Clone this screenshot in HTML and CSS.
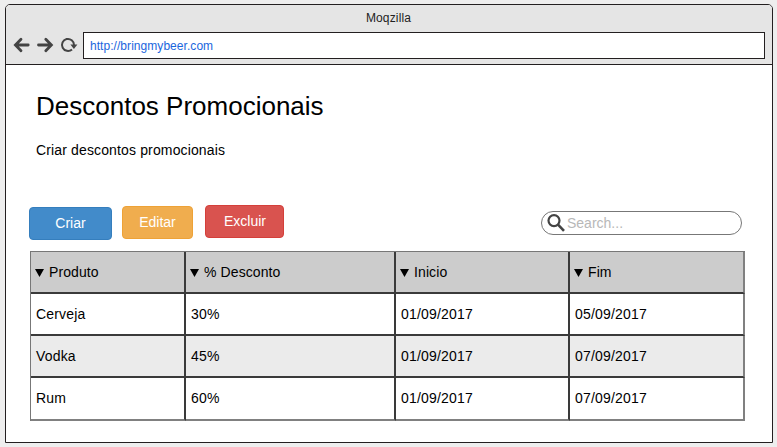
FILE: index.html
```html
<!DOCTYPE html>
<html lang="pt-BR">
<head>
<meta charset="utf-8">
<title>Moqzilla</title>
<link rel="stylesheet" href="styles.css">
</head>
<body>
<div class="window">
  <header class="chrome">
    <div class="title">Moqzilla</div>
    <div class="toolbar">
      <svg class="nav" width="66" height="18" viewBox="0 0 66 18" fill="none" stroke="#444" stroke-width="2.800" stroke-linecap="round">
        <path d="M16.200 9H4.500M9 3.200L3.400 9l5.600 5.800"/>
        <path d="M26.500 9H38.500M33.800 3.200L39.400 9l-5.600 5.800"/>
        <path d="M60 13.400A6 6 0 1 1 62 9" stroke-width="2" stroke-linecap="butt"/>
        <path d="M58.400 8.400h7l-3.500 4.600z" fill="#444" stroke="none"/>
      </svg>
      <div class="url">http://bringmybeer.com</div>
    </div>
  </header>
  <main class="page">
    <h1>Descontos Promocionais</h1>
    <p class="lead">Criar descontos promocionais</p>
    <div class="actions">
      <button class="btn create">Criar</button>
      <button class="btn edit">Editar</button>
      <button class="btn delete">Excluir</button>
      <div class="search">
        <svg width="20" height="20" viewBox="0 0 20 20" fill="none" stroke="#444"><circle cx="7" cy="7.600" r="5.500" stroke-width="2.200"/><path d="M11 11.600L17 17.900" stroke-width="2.600"/></svg>
        <span>Search...</span>
      </div>
    </div>
    <div class="table">
      <div class="cell head"><i class="sort"></i>Produto</div>
      <div class="cell head"><i class="sort"></i>% Desconto</div>
      <div class="cell head"><i class="sort"></i>Inicio</div>
      <div class="cell head"><i class="sort"></i>Fim</div>
      <div class="cell">Cerveja</div><div class="cell">30%</div><div class="cell">01/09/2017</div><div class="cell">05/09/2017</div>
      <div class="cell alt">Vodka</div><div class="cell alt">45%</div><div class="cell alt">01/09/2017</div><div class="cell alt">07/09/2017</div>
      <div class="cell last">Rum</div><div class="cell last">60%</div><div class="cell last">01/09/2017</div><div class="cell last">07/09/2017</div>
    </div>
  </main>
</div>
</body>
</html>
```
FILE: styles.css
```css
* { box-sizing: border-box; }
body {
  margin: 0;
  padding: 4px 0 0 5px;
  height: 447px;
  overflow: hidden;
  background: #eee;
  color: #000;
  font: 14px/16px "Liberation Sans", Arial, sans-serif;
}
.window {
  width: 768px;
  height: 439px;
  border: 1px solid #231f20;
  border-radius: 5px 5px 0 0;
  background: #fff;
  overflow: hidden;
}
.chrome {
  height: 60px;
  background: #e5e5e5;
  border-bottom: 1px solid #231f20;
}
.title {
  height: 27px;
  padding: 5px 1px 0 0;
  text-align: center;
  font-size: 12px;
  letter-spacing: 0.15px;
  color: #222;
}
.toolbar { display: flex; padding: 0 7px 0 6px; }
.nav { flex: none; margin: 4px 5px 0 0; }
.url {
  flex: 1;
  height: 27px;
  padding-left: 6px;
  border: 1px solid #231f20;
  background: #fff;
  color: #1a66dd;
  font-size: 12px;
  letter-spacing: 0.05px;
  line-height: 26px;
}
.page { padding: 25px 27px 0 23px; }
h1 {
  margin: 0 0 0 7px;
  font-size: 26px;
  line-height: 32px;
  font-weight: normal;
}
.lead { margin: 20px 0 0 7px; letter-spacing: 0.14px; }
.actions {
  display: flex;
  align-items: flex-start;
  height: 46px;
  margin-top: 47px;
}
.btn {
  height: 33px;
  padding: 0 0 1px;
  border: 1px solid;
  border-radius: 4px;
  color: #fff;
  font: inherit;
}
.create { width: 83px; margin-top: 2px; background: #428bca; border-color: #357ebd; }
.edit { width: 71px; margin: 1px 12px 0 10px; background: #f0ad4e; border-color: #eea236; }
.delete { width: 79px; padding-left: 1px; background: #d9534f; border-color: #d43f3a; }
.search {
  display: flex;
  align-items: center;
  width: 201px;
  height: 24px;
  margin: 6px 3px 0 auto;
  padding-left: 5px;
  border: 1px solid #777;
  border-radius: 12px;
  color: #b8b8b8;
}
.table {
  display: grid;
  grid-template-columns: 155px 210px 174px 175px;
  grid-template-rows: 42px 42px 42px 43px;
  width: 715px;
  margin-left: 1px;
  border: solid #777;
  border-width: 1px 0 0 1px;
  letter-spacing: 0.18px;
}
.cell {
  display: flex;
  align-items: center;
  padding-left: 5px;
  border: solid #3a3a3a;
  border-width: 0 2px 2px 0;
}
.cell:nth-child(4n) { border-right-color: #808080; }
.head { padding-left: 4px; background: #ccc; letter-spacing: 0.1px; }
.alt { background: #ebebeb; }
.last { padding-bottom: 1px; border-bottom-color: #808080; }
.sort {
  width: 9px;
  height: 8px;
  margin: 2px 5px 0 0;
  background: #000;
  clip-path: polygon(0 0, 100% 0, 50% 100%);
}
```
